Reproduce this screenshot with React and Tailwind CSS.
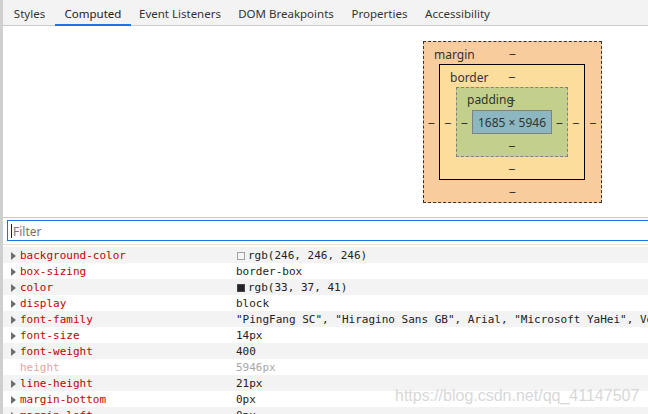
import React from "react";

const tabs = [
  { label: "Styles", w: "w-[51px]" },
  { label: "Computed", w: "w-[76px]", active: true },
  { label: "Event Listeners", w: "w-[98px]" },
  { label: "DOM Breakpoints", w: "w-[114px]" },
  { label: "Properties", w: "w-[73px]" },
  { label: "Accessibility", w: "w-[83px]" },
];

const rows = [
  { name: "background-color", value: "rgb(246, 246, 246)", swatch: "light" },
  { name: "box-sizing", value: "border-box" },
  { name: "color", value: "rgb(33, 37, 41)", swatch: "dark" },
  { name: "display", value: "block" },
  {
    name: "font-family",
    value:
      '"PingFang SC", "Hiragino Sans GB", Arial, "Microsoft YaHei", Verdana, Roboto, "Noto Sans CJK SC", sans-serif',
  },
  { name: "font-size", value: "14px" },
  { name: "font-weight", value: "400" },
  { name: "height", value: "5946px", inherited: true },
  { name: "line-height", value: "21px" },
  { name: "margin-bottom", value: "0px" },
  { name: "margin-left", value: "0px" },
];

function DashCell({ w }) {
  return <div className={`${w} flex items-center justify-center pt-[3px]`}>‒</div>;
}

function DashRow() {
  return <div className="h-[22px] flex items-center justify-center pt-[3px]">‒</div>;
}

function Triangle() {
  return (
    <svg width="5" height="8" viewBox="0 0 5 8" className="block">
      <path d="M0 0 L5 4 L0 8 Z" fill="#6e6e6e" />
    </svg>
  );
}

export default function App() {
  return (
    <div
      className="relative w-[648px] h-[414px] overflow-hidden flex bg-white text-[#333]"
      style={{ fontFamily: '"Noto Sans", "Open Sans", sans-serif' }}
    >
      <div className="w-[3px] shrink-0 bg-[#cfcfcf]" />
      <div className="flex-1 min-w-0 flex flex-col">
        {/* Tab bar */}
        <div className="h-[26px] shrink-0 flex pl-[1px] bg-[#f3f3f3] border-b border-[#cccccc] text-[11.5px] leading-4">
          {tabs.map((t) => (
            <div
              key={t.label}
              className={`relative ${t.w} h-full flex items-center justify-center pt-[2px] ${
                t.active ? "text-[#222]" : "text-[#333]"
              }`}
            >
              {t.label}
              {t.active && (
                <div className="absolute left-0 right-0 bottom-[-1px] h-[2px] bg-[#1a73e8]" />
              )}
            </div>
          ))}
        </div>

        {/* Box model */}
        <div className="h-[191px] shrink-0 pt-[15px] pl-[420px] text-[12px] leading-4 text-[#333]">
          <div className="relative w-[179px] h-[162px] border border-dashed border-[#333] bg-[#f9cc9d] flex flex-col">
            <span className="absolute left-[10px] top-[5px]">margin</span>
            <DashRow />
            <div className="flex items-center">
              <DashCell w="w-[15px]" />
              <div className="relative w-[146px] h-[116px] border border-black bg-[#fddd9b] flex flex-col">
                <span className="absolute left-[10px] top-[5px]">border</span>
                <DashRow />
                <div className="flex items-center">
                  <DashCell w="w-[16px]" />
                  <div className="relative w-[112px] h-[70px] border border-dashed border-[#808080] bg-[#c3d08b] flex flex-col">
                    <span className="absolute left-[10px] top-[4px]">padding</span>
                    <DashRow />
                    <div className="flex items-center">
                      <DashCell w="w-[15px]" />
                      <div className="w-[80px] h-[24px] border border-[#808080] bg-[#8cb6c0] flex items-center justify-center pt-[2px]">
                        1685 × 5946
                      </div>
                      <DashCell w="w-[15px]" />
                    </div>
                    <DashRow />
                  </div>
                  <DashCell w="w-[16px]" />
                </div>
                <DashRow />
              </div>
              <DashCell w="w-[16px]" />
            </div>
            <DashRow />
          </div>
        </div>

        {/* Filter */}
        <div className="shrink-0 border-t border-[#cacaca] pt-[2px] pl-[4px]">
          <div className="h-[21px] mr-[-10px] border border-[#1a73e8] flex items-center pl-[3px] text-[12px] text-[#757575]">
            <span className="w-px h-[14px] bg-[#222] mr-[1px]" />
            <span className="pt-[2px]">Filter</span>
          </div>
        </div>
        <div className="shrink-0 mt-[3px] h-px bg-[#e3e3e3]" />

        {/* Rows */}
        <div
          className="mt-[2px] flex flex-col text-[11px]"
          style={{ fontFamily: '"DejaVu Sans Mono", "Liberation Mono", monospace' }}
        >
          {rows.map((r, i) => (
            <div
              key={r.name}
              className={`h-[16px] shrink-0 flex items-center pt-[2px] whitespace-nowrap overflow-hidden ${
                i % 2 === 0 ? "bg-[#f3f3f3]" : "bg-white"
              }`}
            >
              <div className="w-[233px] shrink-0 flex items-center pl-[8px]">
                <div className="w-[9px] shrink-0">{!r.inherited && <Triangle />}</div>
                <span className={r.inherited ? "text-[#e9a3a3]" : "text-[#c80000]"}>
                  {r.name}
                </span>
              </div>
              <div className="flex items-center">
                {r.swatch && (
                  <span
                    className={`ml-[1px] mr-[3px] w-[8px] h-[8px] shrink-0 border ${
                      r.swatch === "light"
                        ? "bg-[#f6f6f6] border-[#a0a0a0]"
                        : "bg-[#212529] border-[#444]"
                    }`}
                  />
                )}
                <span className={r.inherited ? "text-[#a8a8a8]" : "text-[#222]"}>
                  {r.value}
                </span>
              </div>
            </div>
          ))}
        </div>
      </div>

      {/* Watermark */}
      <div
        className="absolute left-[395px] top-[386px] text-[16px] leading-[20px] text-[#d8d8d8] whitespace-nowrap"
        style={{ fontFamily: '"Liberation Sans", Arial, sans-serif' }}
      >
        https://blog.csdn.net/qq_41147507
      </div>
    </div>
  );
}
